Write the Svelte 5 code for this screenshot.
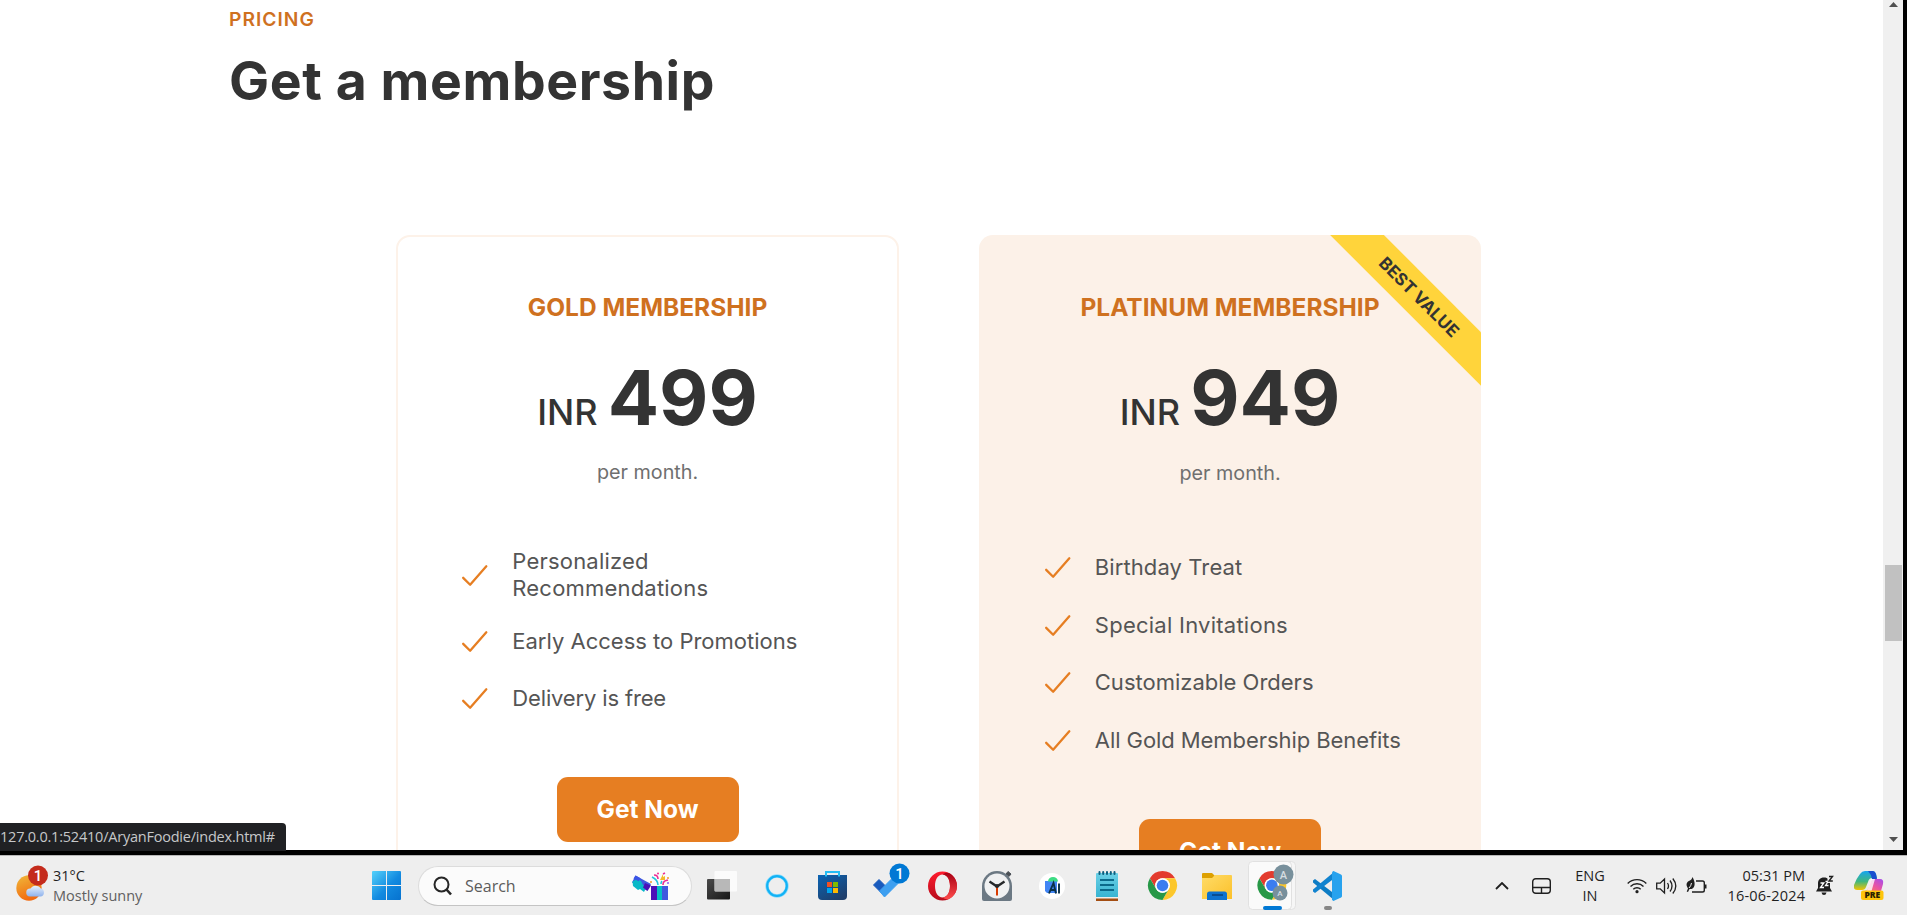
<script>
  const plans = [
    {
      name: 'GOLD MEMBERSHIP', amount: '499', featured: false,
      perks: [
        { text: 'Personalized\nRecommendations', tracking: 0.2 },
        { text: 'Early Access to Promotions', tracking: 0 },
        { text: 'Delivery is free', tracking: -0.15 }
      ]
    },
    {
      name: 'PLATINUM MEMBERSHIP', amount: '949', featured: true,
      perks: [
        { text: 'Birthday Treat', tracking: 0.1 },
        { text: 'Special Invitations', tracking: 0.25 },
        { text: 'Customizable Orders', tracking: 0 },
        { text: 'All Gold Membership Benefits', tracking: -0.07 }
      ]
    }
  ];
</script>

{#snippet chrome()}
  <circle cx="16" cy="16" r="15" fill="#fff" />
  <path d="M3 8.5A15 15 0 0 1 29 8.5H16A7.5 7.5 0 0 0 9.5 19.7Z" fill="#e33b2e" />
  <path d="M29 8.5A15 15 0 0 1 16 31L22.5 19.7A7.5 7.5 0 0 0 16 8.5Z" fill="#fcc72c" />
  <path d="M3 8.5A15 15 0 0 0 16 31L22.5 19.7A7.5 7.5 0 0 1 9.5 19.7Z" fill="#279847" />
  <circle cx="16" cy="16" r="7.5" fill="#fff" />
  <circle cx="16" cy="16" r="6" fill="#3c7df0" />
{/snippet}

<div class="screen">
  <div class="browser">
    <main class="page">
      <span class="eyebrow">PRICING</span>
      <h2>Get a membership</h2>
      <div class="plans">
        {#each plans as plan}
          <article class="plan" class:featured={plan.featured}>
            <h3>{plan.name}</h3>
            <p class="price"><span>INR</span><strong>{plan.amount}</strong></p>
            <p class="period">per month.</p>
            <ul>
              {#each plan.perks as perk}
                <li>
                  <svg class="check" viewBox="0 0 512 512"><path d="M416 128 192 384l-96-96" /></svg>
                  <span style="letter-spacing: {perk.tracking}px">{perk.text}</span>
                </li>
              {/each}
            </ul>
            <a class="button" href="#top">Get Now</a>
            {#if plan.featured}<div class="ribbon">BEST VALUE</div>{/if}
          </article>
        {/each}
      </div>
    </main>
    <div class="scrollbar">
      <svg class="arrow" viewBox="0 0 9 5"><path d="M0 5 4.5 0 9 5Z" /></svg>
      <div class="thumb"></div>
      <svg class="arrow" viewBox="0 0 9 5"><path d="M0 0 4.5 5 9 0Z" /></svg>
    </div>
    <div class="status">127.0.0.1:52410/AryanFoodie/index.html#</div>
  </div>

  <footer class="taskbar">
    <div class="weather">
      <svg width="36" height="40" viewBox="0 0 36 40">
        <defs>
          <linearGradient id="sun" x1="0" y1="0" x2=".4" y2="1"><stop offset="0" stop-color="#f0b93a" /><stop offset="1" stop-color="#f26a10" /></linearGradient>
          <linearGradient id="cloud" x1="0" y1="0" x2="0" y2="1"><stop offset="0" stop-color="#e8f2fd" /><stop offset="1" stop-color="#8fb2ec" /></linearGradient>
        </defs>
        <circle cx="13" cy="24" r="12.7" fill="url(#sun)" />
        <path d="M14 32.500a4 4 0 0 1 .5-8 6 6 0 0 1 10-.3 4.300 4.300 0 0 1 .5 8.300Z" fill="url(#cloud)" />
        <circle cx="22" cy="11.500" r="10" fill="#c42b1c" />
        <text x="22" y="17" class="badge-text">1</text>
      </svg>
      <div class="forecast"><span>31°C</span><span class="muted">Mostly sunny</span></div>
    </div>

    <div class="slot">
      <svg width="29" height="29" viewBox="0 0 29 29">
        <defs><linearGradient id="win" x1="0" y1="0" x2="1" y2="1"><stop offset="0" stop-color="#55d2fb" /><stop offset=".55" stop-color="#128ae0" /><stop offset="1" stop-color="#0672cf" /></linearGradient></defs>
        <path fill="url(#win)" d="M1 0h13v14H0V1a1 1 0 0 1 1-1ZM15 0h13a1 1 0 0 1 1 1v13H15ZM0 15h14v14H1a1 1 0 0 1-1-1ZM15 15h14v13a1 1 0 0 1-1 1H15Z" />
      </svg>
    </div>

    <div class="search">
      <svg width="20" height="20" viewBox="0 0 20 20" fill="none" stroke="#262626" stroke-width="2"><circle cx="8.500" cy="8.500" r="7" /><path d="m13.500 13.500 4.500 5" stroke-width="2.600" /></svg>
      <span>Search</span>
      <svg width="38" height="28" viewBox="0 0 38 28">
        <path d="m3.500 3.500 15.500 8.500-4 6.500-15-8Z" fill="#4059df" />
        <path d="m.5 9.500 4.500-2.500 4 2 2 4 4 1-3 6-4-3-2 1-5-4Z" fill="#09b8c8" />
        <path d="m3.500 3.500 5 2.700-2 3-5-2.700Z" fill="#3a55e6" />
        <path d="m13 11 6 2.500-3.500 5.500-4.500-3.500Z" fill="#4b10b8" />
        <path d="M19 14h17v14H19Z" fill="#4058df" /><path d="M19 14h7v14h-7Z" fill="#4b10b8" /><path d="M25 14h5v14h-5Z" fill="#06bec5" />
        <path d="M26 13c0-4-2-6-6-8M29 12c0-2 0-2 1-3" fill="none" stroke="#22c4dc" stroke-width="1.600" />
        <path d="M22 3c3 0 4 2 4 4M31 13c0-4 2-4 5-5M31 2l2-1" fill="none" stroke="#ed2b95" stroke-width="1.600" />
        <path d="m28 8 3-6v3l2-1v4Z" fill="#f4b72b" />
        <circle cx="26" cy="1.500" r="1" fill="#ed2b95" /><circle cx="36" cy="6" r="1" fill="#f1982a" /><circle cx="19" cy="10" r="1" fill="#f1982a" /><circle cx="36" cy="11" r="1" fill="#8b5cf6" />
      </svg>
    </div>

    <div class="apps">
      <div class="slot">
        <svg width="30" height="29" viewBox="0 0 30 29">
          <defs><linearGradient id="tv" x1="0" y1="0" x2="1" y2="1"><stop offset="0" stop-color="#4a4a4a" /><stop offset="1" stop-color="#161616" /></linearGradient></defs>
          <rect x="0" y="8" width="23" height="20.500" rx="1" fill="url(#tv)" />
          <rect x="7.500" y="0" width="22.500" height="20.500" rx="1" fill="#fbfbfb" /><path d="M8 8h15v12H8Z" fill="#b8b8b8" />
        </svg>
      </div>
      <div class="slot">
        <svg width="24" height="24" viewBox="0 0 24 24" fill="none"><circle cx="12" cy="12" r="10" stroke="#8fdcfb" stroke-width="3.400" /><circle cx="12" cy="12" r="9.800" stroke="#12b2f5" stroke-width="2.200" /></svg>
      </div>
      <div class="slot">
        <svg width="29" height="29" viewBox="0 0 29 29">
          <defs><linearGradient id="bag" x1="0" y1="0" x2=".7" y2="1"><stop offset="0" stop-color="#0a64b4" /><stop offset="1" stop-color="#1f3f6c" /></linearGradient></defs>
          <path d="M0 4h29v21a4 4 0 0 1-4 4H4a4 4 0 0 1-4-4Z" fill="url(#bag)" />
          <path d="M8 5.500V1h13v4.500" fill="none" stroke="#25bdf4" stroke-width="2" />
          <path d="M9 11h5v5H9Z" fill="#f25022" /><path d="M15 11h5v5h-5Z" fill="#7fba00" /><path d="M9 17h5v5H9Z" fill="#00a4ef" /><path d="M15 17h5v5h-5Z" fill="#ffb900" />
        </svg>
      </div>
      <div class="slot todo">
        <svg width="38" height="42" viewBox="0 0 38 42">
          <path d="m1.500 24 5.500-5.500 11 11-5.500 5.500Z" fill="#185abd" stroke="#185abd" stroke-linejoin="round" />
          <path d="M7.500 30 25 12.500l5.500 5.500-18 18Z" fill="#3d9ff0" stroke="#3d9ff0" stroke-linejoin="round" />
          <circle cx="27.500" cy="12.500" r="10" fill="#0078d4" />
          <text x="27.500" y="18" class="badge-text">1</text>
        </svg>
      </div>
      <div class="slot">
        <svg width="29" height="30" viewBox="0 0 29 30">
          <defs><linearGradient id="op" x1="0" y1="0" x2="0" y2="1"><stop offset="0" stop-color="#ff1b2d" /><stop offset="1" stop-color="#b60d1c" /></linearGradient>
          <linearGradient id="op2" x1="0" y1="0" x2="0" y2="1"><stop offset="0" stop-color="#a70014" /><stop offset="1" stop-color="#ff4b4b" /></linearGradient></defs>
          <path fill-rule="evenodd" d="M14.500.5a14.500 14.500 0 1 0 0 29 14.500 14.500 0 0 0 0-29ZM14.500 3.500c4.500 0 7.500 5 7.500 11.500s-3 11.500-7.500 11.500S7 21.500 7 15s3-11.500 7.500-11.500Z" fill="url(#op)" />
          <path d="M14.500 3.500C18 1 21 1.500 24 4c3.500 3 5 7 5 11s-1.500 8-5 11c-3 2.500-6 3-9.500.5 4.500 0 7.500-5 7.500-11.500S19 3.500 14.500 3.500Z" fill="url(#op2)" />
        </svg>
      </div>
      <div class="slot">
        <svg width="30" height="30" viewBox="0 0 30 30">
          <path d="m24 3 2-2.500 3 2.500-2 2.500Z" fill="#494f55" stroke="#494f55" />
          <path d="M0 15a15 15 0 0 1 30 0v13a2 2 0 0 1-2 2H2a2 2 0 0 1-2-2Z" fill="#6b7883" />
          <circle cx="15" cy="15" r="12.500" fill="#f0f1f2" />
          <path d="m7.500 10.500 7.500 5 7.500-5" fill="none" stroke="#25282b" stroke-width="2.400" /><path d="M15 15v9.500" stroke="#d83b01" stroke-width="2" /><circle cx="15" cy="15" r="2" fill="#25282b" />
        </svg>
      </div>
      <div class="slot">
        <svg width="26" height="26" viewBox="0 0 26 26">
          <circle cx="13" cy="13" r="13" fill="#fff" />
          <path d="M6 8h12v12H8l-2-2Z" fill="#4285f4" /><path d="M9 8.500a5 4.500 0 0 1 10 0Z" fill="#3ddc84" />
          <path d="M10 20.500 14.500 10 17 20.500M11.500 17h5M20 10.500v10" fill="none" stroke="#0a3047" stroke-width="1.900" />
        </svg>
      </div>
      <div class="slot">
        <svg width="22" height="30" viewBox="0 0 22 30">
          <defs><linearGradient id="note" x1="0" y1="0" x2="0" y2="1"><stop offset="0" stop-color="#6bd0e6" /><stop offset="1" stop-color="#38b4d2" /></linearGradient></defs>
          <path d="M0 27h22v3H0Z" fill="#a44e13" /><path d="M0 25h22v2.500H0Z" fill="#f3eee9" /><path d="M0 3a1 1 0 0 1 1-1h20a1 1 0 0 1 1 1v23H0Z" fill="url(#note)" />
          <path d="M3.500 1v2M7.200 1v2M11 1v2M14.800 1v2M18.500 1v2" stroke="#0d5e7e" stroke-width="2" stroke-linecap="round" />
          <path d="M4 9h14M4 14h14M4 19h14" stroke="#0b6a8b" stroke-width="1.800" />
        </svg>
      </div>
      <div class="slot"><svg width="31" height="31" viewBox="0 0 32 32">{@render chrome()}</svg></div>
      <div class="slot">
        <svg width="30" height="28" viewBox="0 0 30 28">
          <defs><linearGradient id="fold" x1="0" y1="0" x2="1" y2="1"><stop offset="0" stop-color="#ffdc68" /><stop offset="1" stop-color="#fbc02a" /></linearGradient></defs>
          <path d="M0 2q0-1 1-1h9l3 3v4H0Z" fill="#dda000" /><path d="M0 6h10l3-3h16q1 0 1 1v23H0Z" fill="url(#fold)" />
          <path d="M5 28v-6q0-2.500 2.500-2.500h15q2.500 0 2.500 2.500v6Z" fill="#0d72cf" /><path d="M10 23h11" stroke="#08427d" stroke-width="1.500" />
        </svg>
      </div>
      <div class="slot active">
        <svg width="48" height="50" viewBox="0 0 48 50">
          <rect x="36" y=".5" width="11.500" height="48" rx="4" fill="#f6f6f6" stroke="#e1e1e1" />
          <rect x=".5" y=".5" width="43" height="48" rx="4" fill="#fafafa" stroke="#e1e1e1" />
          <g transform="translate(8.500 9) scale(.96)">{@render chrome()}</g>
          <circle cx="35.500" cy="13.500" r="10" fill="#78909c" /><text x="35.500" y="17.500" class="avatar">A</text>
          <circle cx="32" cy="32" r="7.500" fill="#78909c" /><text x="32" y="35" class="avatar small">A</text>
          <rect x="15" y="45" width="19" height="4" rx="2" fill="#0078d4" />
        </svg>
      </div>
      <div class="slot running">
        <svg width="30" height="30" viewBox="0 0 30 30">
          <path d="M1 9.500 3 8l19 14.500V29L1 11.500Z" fill="#0d7cc4" />
          <path d="M1 20.500 3 22 22 7.500V1L1 18.500Z" fill="#1183cf" />
          <path d="M21.500 0 29 3.500q1 .5 1 1.500v20q0 1-1 1.500L21.500 30q-1-.3-1.500-1.500V1.500q.5-1.200 1.500-1.500Z" fill="#27a2ee" />
        </svg>
      </div>
    </div>

    <div class="tray">
      <svg width="14" height="8" viewBox="0 0 14 8" fill="none" stroke="#1f1f1f" stroke-width="1.800"><path d="m1 7 6-6 6 6" /></svg>
      <svg width="19" height="16" viewBox="0 0 19 16" fill="none" stroke="#1f1f1f" stroke-width="1.400"><rect x=".7" y=".7" width="17.600" height="14.600" rx="3" /><path d="M1 9.500h17M9.500 9.500V15" /></svg>
      <div class="lang"><span>ENG</span><span>IN</span></div>
      <svg width="20" height="16" viewBox="0 0 20 16" fill="none" stroke="#1f1f1f" stroke-width="1.400"><path d="M.7 5.500a13 13 0 0 1 18.600 0M3.500 8.500a9.200 9.200 0 0 1 13 0M6.300 11.300a5.200 5.200 0 0 1 7.400 0" /><circle cx="10" cy="13.700" r="1.600" fill="#1f1f1f" stroke="none" /></svg>
      <svg class="nudge" width="21" height="18" viewBox="0 0 21 18" fill="none" stroke="#1f1f1f" stroke-width="1.300"><path d="M.7 6.200h3.500L8.500 2v14l-4.300-4.200H.7ZM11.500 6q2 3 0 6M14 3.500q4 5.500 0 11M16.800 1.500q6 7.500 0 15" /></svg>
      <svg class="nudge" width="21" height="17" viewBox="0 0 21 17"><path d="M10 4h6.500q1.800 0 1.800 1.800v7.400q0 1.800-1.800 1.800H6" fill="none" stroke="#1f1f1f" stroke-width="1.400" /><path d="M18.500 7.500h2v4h-2Z" fill="#1f1f1f" /><path d="M6.500 0c2.500 4.500 3.500 10-1 12H3.500L2 15l-1.300-.6L2 11.500C-.5 8 .5 5 3 4 5 3 6 2 6.500 0Z" fill="#1f1f1f" /><path d="M3 11q2-2 2.500-5" stroke="#eee" fill="none" /></svg>
      <div class="clock"><span>05:31 PM</span><span class="date">16-06-2024</span></div>
      <svg width="18" height="21" viewBox="0 0 18 21"><path d="M8 2.500C4 2.500 2 5 2 8v5l-2 3.500h16L14 13V8c0-3-2-5.500-6-5.500ZM5.500 17.500h5q-.5 2.500-2.500 2.500t-2.500-2.500Z" fill="#1f1f1f" /><path d="M11.500 0H18v8h-6.500Z" fill="#eee" /><path d="M4.500 8h3.300L4.500 12.500H8M9.500 6.500h2.700L9.500 10.500h3" fill="none" stroke="#fff" stroke-width="1.300" /><path d="M13 1.500h3.500L13 6h3.800" fill="none" stroke="#1f1f1f" stroke-width="1.400" /></svg>
      <svg width="30" height="30" viewBox="0 0 30 30">
        <defs>
          <linearGradient id="cpa" x1="0" y1="0" x2="0" y2="1"><stop offset="0" stop-color="#16a5f0" /><stop offset=".55" stop-color="#40b77e" /><stop offset="1" stop-color="#f4c400" /></linearGradient>
          <linearGradient id="cpb" x1="1" y1="0" x2="0" y2="1"><stop offset="0" stop-color="#a24df0" /><stop offset=".5" stop-color="#e952a4" /><stop offset="1" stop-color="#ff8050" /></linearGradient>
        </defs>
        <path d="M6 3q2-3 5-3h7q3 0 4 3l1 4h-5q-3 0-4 4l-2 5q-1 3-4 3H3q-4 0-3-5 2-6 6-11Z" fill="url(#cpa)" />
        <path d="M14 0h5q2 0 3 3l1 5h-5q-1-5-4-8Z" fill="#1b4fcf" />
        <path d="M20 8h6q4 0 3 5l-2 7H11q3-1 4-4l2-6q1-2 3-2Z" fill="url(#cpb)" />
        <path d="M17 8h4l-3.500 12H12q2-1 3-5Z" fill="#fff" opacity=".8" />
        <rect x="7" y="19.500" width="22.500" height="9.500" rx="2" fill="#ffc40c" />
        <text x="18.300" y="27.300" class="pre">PRE</text>
      </svg>
    </div>
  </footer>
</div>

<style>
  :global(body) { background: #000; }
  .screen { width: 1907px; height: 915px; display: flex; flex-direction: column; overflow: hidden; font-family: Inter, sans-serif; color: #333; }
  h2, h3, p, ul { margin: 0; padding: 0; font-weight: inherit; }
  .browser { position: relative; height: 850px; flex: none; display: flex; padding: 0 4px 5px 0; background: #000; overflow: hidden; }
  .page { width: 1883px; height: 850px; box-sizing: border-box; padding: 7px 0 0 229px; background: #fff; overflow: hidden; display: flex; flex-direction: column; align-items: flex-start; }
  .eyebrow { flex: none; font-size: 19.250px; line-height: 24px; font-weight: 600; color: #cf711f; letter-spacing: 1px; }
  h2 { flex: none; margin-top: 17px; font-size: 53.500px; line-height: 66px; font-weight: 700; letter-spacing: .6px; white-space: nowrap; }
  .plans { flex: none; display: flex; align-items: flex-start; gap: 80px; margin: 121px 0 0 167.300px; }
  .plan { position: relative; box-sizing: border-box; width: 502.500px; height: 730px; padding: 55px 58px; border: 2px solid #fdf2e9; border-radius: 14px; display: flex; flex-direction: column; align-items: center; overflow: hidden; }
  .featured { background: #fcf1e8; border: 0; padding: 57px 60px; }
  h3 { font-size: 24.500px; line-height: 30px; font-weight: 650; color: #cf711f; white-space: nowrap; }
  .price { display: flex; align-items: baseline; margin-top: 35px; height: 80px; line-height: 80px; }
  .price span { font-size: 36px; font-weight: 550; margin-right: 10px; }
  .price strong { font-size: 76px; font-weight: 700; }
  .period { margin-top: 23px; font-size: 19.750px; line-height: 24px; color: #6f6f6f; }
  .featured .period { margin-top: 24px; }
  ul { list-style: none; align-self: stretch; margin-top: 64px; display: flex; flex-direction: column; gap: 20.500px; }
  li { display: flex; align-items: center; gap: 18.500px; min-height: 37px; font-size: 22px; line-height: 27px; color: #555; white-space: pre; }
  .check { flex: none; width: 37.500px; height: 37px; fill: none; stroke: #e67e22; stroke-width: 32; stroke-linecap: round; stroke-linejoin: round; }
  .button { flex: none; width: 182px; height: 65px; margin-top: 60px; border-radius: 11px; background: #e67e22; color: #fff; font-size: 24.500px; line-height: 65px; font-weight: 700; text-align: center; text-decoration: none; }
  .ribbon { position: absolute; left: 290px; top: 43px; width: 300px; height: 38px; background: #ffd43b; font-size: 17px; line-height: 38px; font-weight: 700; text-align: center; transform: rotate(45deg); }
  .scrollbar { width: 20px; height: 850px; background: #f0f0f0; display: flex; flex-direction: column; align-items: center; flex: none; }
  .scrollbar .arrow { width: 9px; height: 5px; fill: #505050; flex: none; }
  .scrollbar .arrow:first-child { margin-top: 2px; }
  .thumb { width: 17px; height: 76px; margin: 558px 0 196px; background: #c1c1c1; flex: none; }
  .status { position: absolute; left: 0; bottom: 4px; width: 286px; height: 28px; box-sizing: border-box; background: #202124; border-top-right-radius: 4px; color: #c6c8ca; font-family: "Open Sans", sans-serif; font-size: 14.500px; letter-spacing: -.22px; line-height: 27px; white-space: nowrap; }

  .taskbar { flex: none; height: 60px; box-sizing: border-box; border-top: 1px solid #b8b8b8; background: #eee; display: flex; align-items: center; font-family: "Open Sans", sans-serif; font-size: 14.500px; color: #1f1f1f; }
  .weather { width: 343px; padding-left: 16px; display: flex; gap: 1px; align-items: center; }
  .weather svg { margin-top: -4px; }
  .forecast, .lang, .clock { display: flex; flex-direction: column; line-height: 20px; white-space: nowrap; }
  .muted { color: #606060; }
  .date { letter-spacing: .2px; margin-right: -.2px; }
  .slot { width: 55px; height: 58px; display: grid; place-items: center; flex: none; }
  .todo svg { margin: -8px 0 0 8px; }
  .search { box-sizing: border-box; width: 274px; height: 40px; margin: 0 2.500px 0 4px; padding: 0 21px 0 14px; border: 1px solid #dcdcdc; border-bottom-color: #c4c4c4; border-radius: 20px; background: #fbfbfb; display: flex; align-items: center; color: #5c5c5c; font-size: 16px; flex: none; }
  .search span { margin: 0 auto 0 12px; }
  .apps { display: flex; }
  .running { position: relative; }
  .running::after { content: ""; position: absolute; left: 24px; bottom: 5px; width: 8px; height: 4px; border-radius: 2px; background: #868686; }
  .tray { margin-left: auto; padding-right: 14px; display: grid; grid-template-columns: 40px 38px 60px 34px 28px 32px 91px 40px 48px; align-items: center; justify-items: center; }
  .nudge { margin-right: 3px; }
  .lang { align-items: center; }
  .clock { align-items: flex-end; justify-self: end; }
  .badge-text { font: 500 15px Roboto, sans-serif; fill: #fff; text-anchor: middle; }
  .avatar { font: 500 11px Roboto, sans-serif; fill: #d6dde1; text-anchor: middle; }
  .small { font-size: 8px; }
  .pre { font: 800 8.500px "Open Sans", sans-serif; fill: #2b2100; text-anchor: middle; }
</style>
